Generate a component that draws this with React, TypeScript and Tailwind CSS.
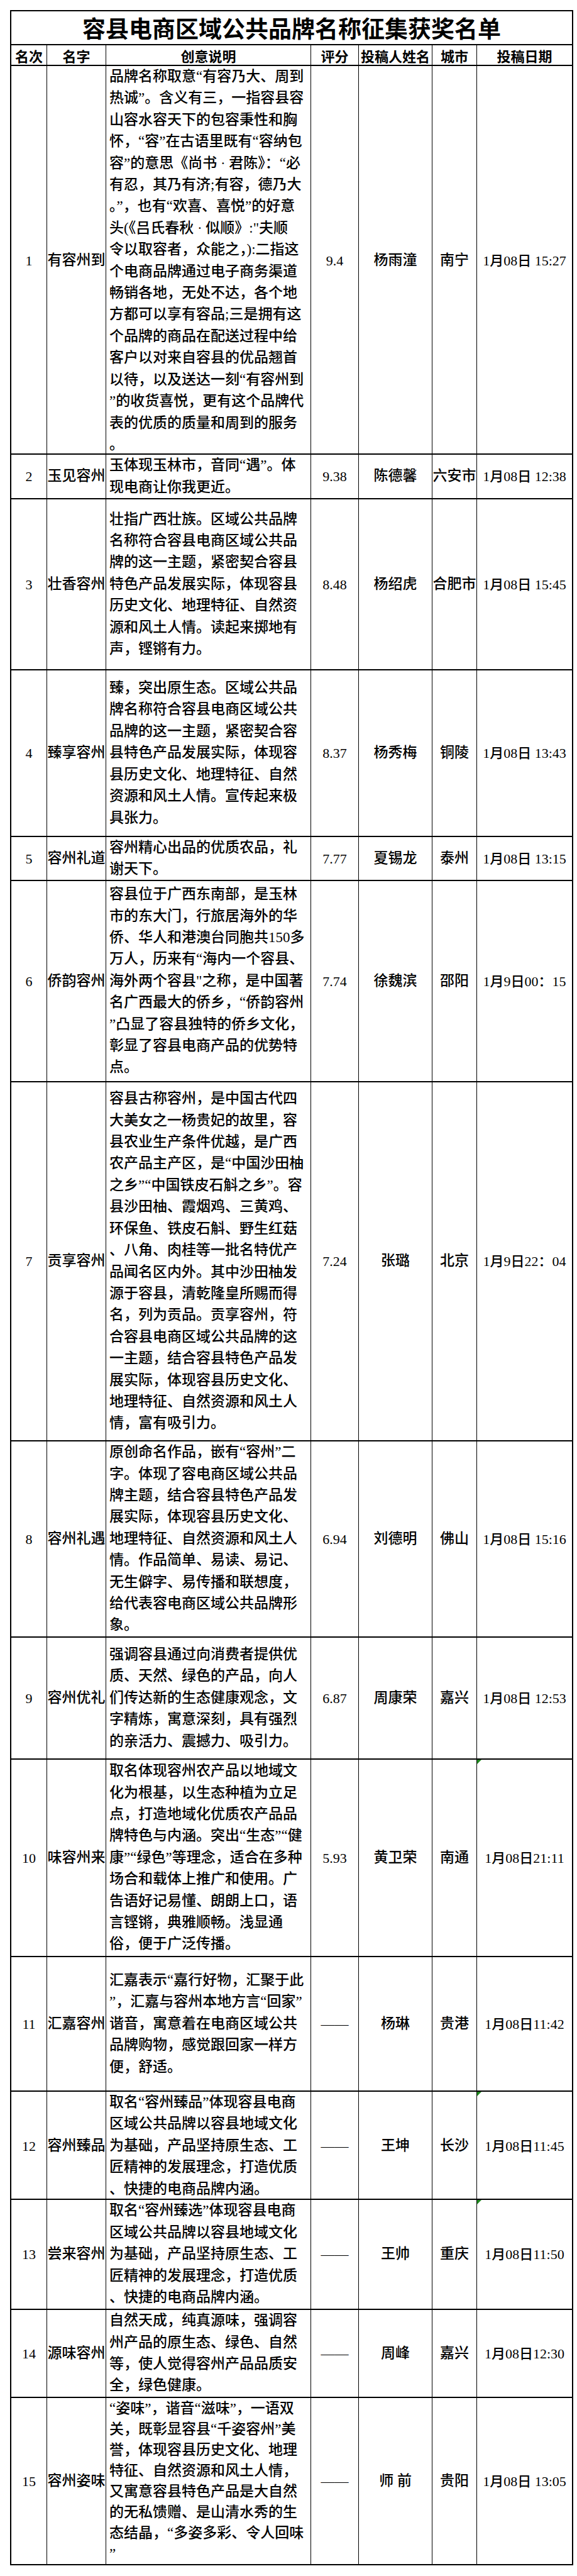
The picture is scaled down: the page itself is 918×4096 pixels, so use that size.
const COLS = 'grid grid-cols-[57px_94px_326px_76px_117px_71px_151px]';

type Entry = {
  rank: string;
  name: string;
  lines: string[];
  score: string;
  author: string;
  city: string;
  date: string;
  h: string;
  flag?: boolean;
  tight?: boolean;
};

const ENTRIES: Entry[] = [
  {
    rank: '1',
    name: '有容州到',
    lines: [
      '品牌名称取意“有容乃大、周到',
      '热诚”。含义有三，一指容县容',
      '山容水容天下的包容秉性和胸',
      '怀，“容”在古语里既有“容纳包',
      '容”的意思《尚书 · 君陈》：“必',
      '有忍，其乃有济;有容，德乃大',
      '。”，也有“欢喜、喜悦”的好意',
      '头(《吕氏春秋 · 似顺》:"夫顺',
      '令以取容者，众能之，):二指这',
      '个电商品牌通过电子商务渠道',
      '畅销各地，无处不达，各个地',
      '方都可以享有容品;三是拥有这',
      '个品牌的商品在配送过程中给',
      '客户以对来自容县的优品翘首',
      '以待，以及送达一刻“有容州到',
      '”的收货喜悦，更有这个品牌代',
      '表的优质的质量和周到的服务',
      '。',
    ],
    score: '9.4',
    author: '杨雨潼',
    city: '南宁',
    date: '1月08日 15:27',
    h: 'h-[618px]',
  },
  {
    rank: '2',
    name: '玉见容州',
    lines: ['玉体现玉林市，音同“遇”。体', '现电商让你我更近。'],
    score: '9.38',
    author: '陈德馨',
    city: '六安市',
    date: '1月08日 12:38',
    h: 'h-[71px]',
  },
  {
    rank: '3',
    name: '壮香容州',
    lines: [
      '壮指广西壮族。区域公共品牌',
      '名称符合容县电商区域公共品',
      '牌的这一主题，紧密契合容县',
      '特色产品发展实际，体现容县',
      '历史文化、地理特征、自然资',
      '源和风土人情。读起来掷地有',
      '声，铿锵有力。',
    ],
    score: '8.48',
    author: '杨绍虎',
    city: '合肥市',
    date: '1月08日 15:45',
    h: 'h-[272px]',
  },
  {
    rank: '4',
    name: '臻享容州',
    lines: [
      '臻，突出原生态。区域公共品',
      '牌名称符合容县电商区域公共',
      '品牌的这一主题，紧密契合容',
      '县特色产品发展实际，体现容',
      '县历史文化、地理特征、自然',
      '资源和风土人情。宣传起来极',
      '具张力。',
    ],
    score: '8.37',
    author: '杨秀梅',
    city: '铜陵',
    date: '1月08日 13:43',
    h: 'h-[265px]',
  },
  {
    rank: '5',
    name: '容州礼道',
    lines: ['容州精心出品的优质农品，礼', '谢天下。'],
    score: '7.77',
    author: '夏锡龙',
    city: '泰州',
    date: '1月08日 13:15',
    h: 'h-[70px]',
  },
  {
    rank: '6',
    name: '侨韵容州',
    lines: [
      '容县位于广西东南部，是玉林',
      '市的东大门，行旅居海外的华',
      '侨、华人和港澳台同胞共150多',
      '万人，历来有“海内一个容县、',
      '海外两个容县"之称，是中国著',
      '名广西最大的侨乡，“侨韵容州',
      '”凸显了容县独特的侨乡文化，',
      '彰显了容县电商产品的优势特',
      '点。',
    ],
    score: '7.74',
    author: '徐魏滨',
    city: '邵阳',
    date: '1月9日00：15',
    h: 'h-[320px]',
  },
  {
    rank: '7',
    name: '贡享容州',
    lines: [
      '容县古称容州，是中国古代四',
      '大美女之一杨贵妃的故里，容',
      '县农业生产条件优越，是广西',
      '农产品主产区，是“中国沙田柚',
      '之乡”“中国铁皮石斛之乡”。容',
      '县沙田柚、霞烟鸡、三黄鸡、',
      '环保鱼、铁皮石斛、野生红菇',
      '、八角、肉桂等一批名特优产',
      '品闻名区内外。其中沙田柚发',
      '源于容县，清乾隆皇所赐而得',
      '名，列为贡品。贡享容州，符',
      '合容县电商区域公共品牌的这',
      '一主题，结合容县特色产品发',
      '展实际，体现容县历史文化、',
      '地理特征、自然资源和风土人',
      '情，富有吸引力。',
    ],
    score: '7.24',
    author: '张璐',
    city: '北京',
    date: '1月9日22：04',
    h: 'h-[571px]',
  },
  {
    rank: '8',
    name: '容州礼遇',
    lines: [
      '原创命名作品，嵌有“容州”二',
      '字。体现了容电商区域公共品',
      '牌主题，结合容县特色产品发',
      '展实际，体现容县历史文化、',
      '地理特征、自然资源和风土人',
      '情。作品简单、易读、易记、',
      '无生僻字、易传播和联想度，',
      '给代表容电商区域公共品牌形',
      '象。',
    ],
    score: '6.94',
    author: '刘德明',
    city: '佛山',
    date: '1月08日 15:16',
    h: 'h-[312px]',
  },
  {
    rank: '9',
    name: '容州优礼',
    lines: [
      '强调容县通过向消费者提供优',
      '质、天然、绿色的产品，向人',
      '们传达新的生态健康观念，文',
      '字精炼，寓意深刻，具有强烈',
      '的亲活力、震撼力、吸引力。',
    ],
    score: '6.87',
    author: '周康荣',
    city: '嘉兴',
    date: '1月08日 12:53',
    h: 'h-[194px]',
  },
  {
    rank: '10',
    name: '味容州来',
    lines: [
      '取名体现容州农产品以地域文',
      '化为根基，以生态种植为立足',
      '点，打造地域化优质农产品品',
      '牌特色与内涵。突出“生态”“健',
      '康”“绿色”等理念，适合在多种',
      '场合和载体上推广和使用。广',
      '告语好记易懂、朗朗上口，语',
      '言铿锵，典雅顺畅。浅显通',
      '俗，便于广泛传播。',
    ],
    score: '5.93',
    author: '黄卫荣',
    city: '南通',
    date: '1月08日21:11',
    h: 'h-[314px]',
    flag: true,
  },
  {
    rank: '11',
    name: '汇嘉容州',
    lines: [
      '汇嘉表示“嘉行好物，汇聚于此',
      '”，汇嘉与容州本地方言“回家”',
      '谐音，寓意着在电商区域公共',
      '品牌购物，感觉跟回家一样方',
      '便，舒适。',
    ],
    score: '——',
    author: '杨琳',
    city: '贵港',
    date: '1月08日11:42',
    h: 'h-[214px]',
  },
  {
    rank: '12',
    name: '容州臻品',
    lines: [
      '取名“容州臻品”体现容县电商',
      '区域公共品牌以容县地域文化',
      '为基础，产品坚持原生态、工',
      '匠精神的发展理念，打造优质',
      '、快捷的电商品牌内涵。',
    ],
    score: '——',
    author: '王坤',
    city: '长沙',
    date: '1月08日11:45',
    h: 'h-[172px]',
    flag: true,
  },
  {
    rank: '13',
    name: '尝来容州',
    lines: [
      '取名“容州臻选”体现容县电商',
      '区域公共品牌以容县地域文化',
      '为基础，产品坚持原生态、工',
      '匠精神的发展理念，打造优质',
      '、快捷的电商品牌内涵。',
    ],
    score: '——',
    author: '王帅',
    city: '重庆',
    date: '1月08日11:50',
    h: 'h-[175px]',
    flag: true,
  },
  {
    rank: '14',
    name: '源味容州',
    lines: [
      '自然天成，纯真源味，强调容',
      '州产品的原生态、绿色、自然',
      '等，使人觉得容州产品品质安',
      '全，绿色健康。',
    ],
    score: '——',
    author: '周峰',
    city: '嘉兴',
    date: '1月08日12:30',
    h: 'h-[140px]',
  },
  {
    rank: '15',
    name: '容州姿味',
    lines: [
      '“姿味”，谐音“滋味”，一语双',
      '关，既彰显容县“千姿容州”美',
      '誉，体现容县历史文化、地理',
      '特征、自然资源和风土人情，',
      '又寓意容县特色产品是大自然',
      '的无私馈赠、是山清水秀的生',
      '态结晶，“多姿多彩、令人回味',
      '”',
    ],
    score: '——',
    author: '师 前',
    city: '贵阳',
    date: '1月08日 13:05',
    h: 'h-[264px]',
    tight: true,
  },
];

const HEADERS = ['名次', '名字', '创意说明', '评分', '投稿人姓名', '城市', '投稿日期'];

function Row({ e, last }: { e: Entry; last: boolean }) {
  const cell = 'flex items-center justify-center border-r border-black whitespace-nowrap';
  return (
    <div className={`${COLS} ${e.h} ${last ? '' : 'border-b-2 border-black'}`}>
      <div className={`${cell} text-[22px]`}>{e.rank}</div>
      <div className={`${cell} text-[23px]`}>{e.name}</div>
      <div
        className={`flex flex-col justify-center border-r border-black pl-[5px] text-[23px] ${
          e.tight ? 'leading-[33px]' : 'leading-[34.4px]'
        }`}
      >
        {e.lines.map((l, i) => (
          <div key={i} className="whitespace-nowrap">
            {l}
          </div>
        ))}
      </div>
      <div className={`${cell} text-[22px]`}>{e.score}</div>
      <div className={`${cell} text-[23px]`}>{e.author}</div>
      <div className={`${cell} text-[23px]`}>{e.city}</div>
      <div className="relative flex items-center justify-center whitespace-nowrap text-[22px]">
        {e.flag && (
          <svg className="absolute left-0 top-0" width="7" height="7" viewBox="0 0 7 7">
            <polygon points="0,0 7,0 0,7" fill="#1f8a1f" />
          </svg>
        )}
        {e.date}
      </div>
    </div>
  );
}

export default function App() {
  return (
    <div className="min-h-[4096px] w-[918px] bg-white pt-[16px] pl-[16px] font-medium text-black font-['Liberation_Serif','Noto_Sans_CJK_SC',serif]">
      <div className="w-[896px] border-2 border-black">
        <div className="flex h-[54px] items-center justify-center border-b-2 border-black font-['Noto_Sans_CJK_SC',sans-serif] text-[37px] font-bold leading-none">
          容县电商区域公共品牌名称征集获奖名单
        </div>
        <div className={`${COLS} h-[33px] border-b-2 border-black`}>
          {HEADERS.map((h, i) => (
            <div
              key={h}
              className={`flex items-center justify-center whitespace-nowrap font-['Noto_Sans_CJK_SC',sans-serif] text-[22px] font-bold leading-none ${
                i < HEADERS.length - 1 ? 'border-r border-black' : ''
              }`}
            >
              {h}
            </div>
          ))}
        </div>
        {ENTRIES.map((e, i) => (
          <Row key={e.rank} e={e} last={i === ENTRIES.length - 1} />
        ))}
      </div>
    </div>
  );
}
